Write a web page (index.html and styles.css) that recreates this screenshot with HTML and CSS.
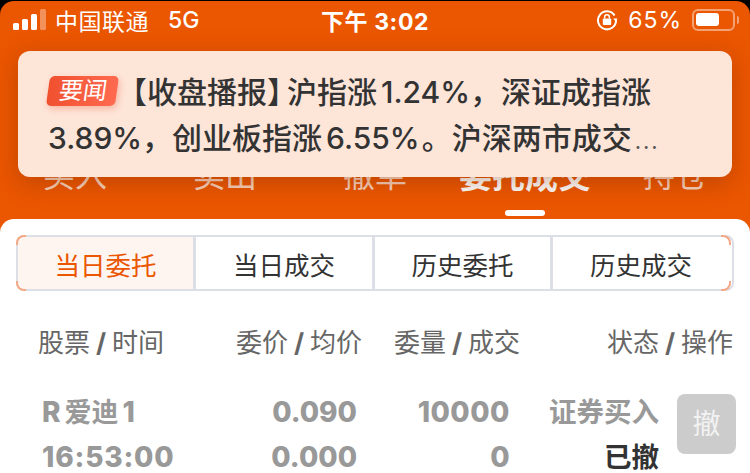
FILE: index.html
```html
<!DOCTYPE html>
<html lang="zh-CN">
<head>
  <meta charset="UTF-8">
  <meta name="viewport" content="width=device-width, initial-scale=1">
  <title>委托成交</title>
  <link rel="stylesheet" href="styles.css">
</head>
<body>
  <div class="screen">
    <div class="status-bar">
      <div class="status-left">
        <svg class="signal" width="36" height="21" viewBox="0 0 36 21">
          <rect x="1" y="14" width="6" height="7" rx="1.5" fill="#fff"/>
          <rect x="10" y="10" width="6" height="11" rx="1.5" fill="#fff"/>
          <rect x="19" y="5" width="6" height="16" rx="1.5" fill="#fff"/>
          <rect x="28" y="0" width="6" height="21" rx="1.5" fill="#fff" fill-opacity="0.35"/>
        </svg>
        <span class="carrier">中国联通</span>
        <span class="network">5G</span>
      </div>
      <div class="status-time">下午 3:02</div>
      <div class="status-right">
        <svg class="lock" width="22" height="22" viewBox="0 0 22 22" fill="none">
          <path d="M18.6 6.5A9 9 0 1 0 20 11" stroke="#fff" stroke-width="2"/>
          <path d="M21.6 9.4h-4.4l2.4 3z" fill="#fff"/>
          <rect x="6.8" y="9.6" width="8.4" height="6.4" rx="1" fill="#fff"/>
          <path d="M8.6 9.6V8.2a2.4 2.4 0 0 1 4.8 0v1.4" stroke="#fff" stroke-width="1.5"/>
        </svg>
        <span class="percent">65%</span>
        <div class="battery"><div class="battery-level"></div></div>
        <div class="battery-cap"></div>
      </div>
    </div>

    <div class="nav-tabs">
      <div class="nav-tab">买入</div>
      <div class="nav-tab">卖出</div>
      <div class="nav-tab">撤单</div>
      <div class="nav-tab active">委托成交</div>
      <div class="nav-tab">持仓</div>
    </div>

    <div class="sheet">
      <div class="segments">
        <div class="segment current">当日委托</div>
        <div class="segment">当日成交</div>
        <div class="segment">历史委托</div>
        <div class="segment last">历史成交</div>
      </div>

      <div class="table-head">
        <div>股票<i>/</i>时间</div>
        <div>委价<i>/</i>均价</div>
        <div>委量<i>/</i>成交</div>
        <div>状态<i>/</i>操作</div>
      </div>

      <div class="order-row">
        <div class="col-name">
          <div>R<span class="cn">爱迪</span>1</div>
          <div class="time">16:53:00</div>
        </div>
        <div class="col-price">
          <div>0.090</div>
          <div>0.000</div>
        </div>
        <div class="col-qty">
          <div>10000</div>
          <div>0</div>
        </div>
        <div class="col-state">
          <div>证券买入</div>
          <div class="state-done">已撤</div>
        </div>
        <div class="cancel-btn">撤</div>
      </div>
    </div>

    <div class="notice">
      <div class="notice-line"><span class="badge"><span class="badge-text">要闻</span></span>【收盘播报<span class="tight">】</span>沪指涨<span class="num">1.24%</span>，<span class="lead">深证成指涨</span></div>
      <div class="notice-line">3.89%，创业板指涨<span class="num">6.55%</span><span class="stop">。</span>沪深两市成交<span class="more">...</span></div>
    </div>
  </div>
</body>
</html>
```

FILE: styles.css
```css
* {
  box-sizing: border-box;
}
html, body {
  margin: 0;
  height: 473px;
  overflow: hidden;
  background: #000;
}
body {
  font-family: Inter, "Noto Sans CJK SC", sans-serif;
  padding-top: 1px;
}
.screen {
  position: relative;
  height: 472px;
  background: #eb5600;
  border-radius: 14px 14px 0 0;
  overflow: hidden;
}

/* status bar */
.status-bar {
  height: 43px;
  padding: 0 12px 6px;
  display: grid;
  grid-template-columns: 1fr auto 1fr;
  align-items: center;
  color: #fff;
  font-size: 23px;
}
.status-left {
  display: flex;
  align-items: center;
}
.signal {
  margin-right: 7px;
}
.carrier {
  letter-spacing: 0.5px;
}
.network {
  margin-left: 19px;
  font-weight: 500;
}
.status-time {
  font-weight: 700;
  letter-spacing: 0.6px;
}
.status-right {
  display: flex;
  align-items: center;
  justify-content: flex-end;
  margin-right: -1px;
}
.lock {
  margin-right: 10px;
}
.percent {
  letter-spacing: 1px;
  margin-right: 10px;
}
.battery {
  width: 43px;
  height: 22px;
  padding: 2.5px 2px;
  border: 2px solid rgba(255,255,255,0.45);
  border-radius: 6px;
}
.battery-level {
  width: 23px;
  height: 100%;
  background: #fff;
  border-radius: 3px;
}
.battery-cap {
  width: 2px;
  height: 8px;
  margin-left: 2px;
  background: rgba(255,255,255,0.45);
  border-radius: 0 2px 2px 0;
}

/* tabs behind the notice */
.nav-tabs {
  display: grid;
  grid-template-columns: repeat(5, 150px);
  height: 175px;
  padding-top: 112px;
}
.nav-tab {
  position: relative;
  text-align: center;
  font-size: 32px;
  line-height: 40px;
  color: rgba(255,255,255,0.75);
}
.nav-tab.active {
  color: #fff;
  font-weight: 700;
  font-size: 33px;
}
.nav-tab.active::after {
  content: "";
  position: absolute;
  left: 55px;
  top: 54px;
  width: 40px;
  height: 6px;
  border-radius: 3px;
  background: #fff;
}

/* white sheet */
.sheet {
  height: 254px;
  background: #fff;
  border-radius: 14px 14px 0 0;
  padding: 16px 16px 0;
}
.segments {
  display: grid;
  grid-template-columns: 175px 179px 178px 179px;
  height: 56px;
  border: 2px solid #dcdfe6;
  border-radius: 8px;
  font-size: 25.5px;
  color: #333;
}
.segment {
  position: relative;
  display: flex;
  align-items: center;
  justify-content: center;
  border-left: 3px solid #dcdfe6;
}
.segment:first-child {
  border-left: 0;
}
.segment.current {
  background: #fef5f0;
  color: #eb5600;
  border-radius: 6px 0 0 6px;
}
/* peach corners on the outer edge */
.current::before, .current::after, .last::before, .last::after {
  content: "";
  position: absolute;
  width: 8px;
  height: 8px;
  border: 0 solid #f3a985;
}
.current::before {
  left: -2px;
  top: -2px;
  border-width: 2px 0 0 2px;
  border-radius: 8px 0 0 0;
}
.current::after {
  left: -2px;
  bottom: -2px;
  border-width: 0 0 2px 2px;
  border-radius: 0 0 0 8px;
}
.last::before {
  right: -2px;
  top: -2px;
  border-width: 2px 2px 0 0;
  border-radius: 0 8px 0 0;
}
.last::after {
  right: -2px;
  bottom: -2px;
  border-width: 0 2px 2px 0;
  border-radius: 0 0 8px 0;
}

.table-head {
  display: grid;
  grid-template-columns: 146px 178px 158px 213px;
  margin-top: 32px;
  padding-left: 22px;
  font-size: 26px;
  line-height: 40px;
  color: #666;
}
.table-head div {
  text-align: right;
  white-space: nowrap;
}
.table-head div:first-child {
  text-align: left;
}
.table-head i {
  font-style: normal;
  font-weight: 700;
  margin: 0 6px;
}

.order-row {
  display: grid;
  grid-template-columns: 150px 165px 153px 149px 77px;
  margin-top: 27px;
  padding-left: 26px;
  font-size: 28px;
  line-height: 45px;
  font-weight: 800;
  color: #999;
}
.cn {
  margin: 0 4px;
  font-size: 27px;
  font-weight: 700;
}
.col-name {
  white-space: nowrap;
}
.time {
  letter-spacing: 0.8px;
}
.col-price, .col-qty, .col-state {
  text-align: right;
}
.col-qty {
  letter-spacing: 0.5px;
}
.col-state {
  font-size: 27.5px;
  font-weight: 700;
}
.state-done {
  color: #333;
}
.cancel-btn {
  width: 59px;
  height: 60px;
  margin-left: 18px;
  margin-top: 4px;
  display: flex;
  align-items: center;
  justify-content: center;
  background: #ccc;
  color: #f2f2f2;
  border-radius: 8px;
  font-size: 28px;
  font-weight: 400;
}

/* notice over the tabs */
.notice {
  position: absolute;
  left: 18px;
  top: 50px;
  width: 714px;
  height: 126px;
  padding: 18px 30px;
  background: #fde5d8;
  border-radius: 12px;
  box-shadow: 0 6px 24px rgba(110,40,0,0.35);
  font-size: 30px;
  line-height: 46px;
  font-weight: 500;
  color: #333;
  white-space: nowrap;
}
.badge {
  display: inline-block;
  position: relative;
  width: 69px;
  height: 30px;
  vertical-align: -3px;
  transform: skewX(-8deg);
  background: linear-gradient(90deg, #f0512f, #ff6a50);
  border-radius: 5px;
  box-shadow: 2px 3px 6px rgba(240,80,50,0.3);
}
.badge-text {
  position: absolute;
  left: 11px;
  top: 0;
  font-size: 24px;
  font-weight: 400;
  line-height: 30px;
  color: #fff;
}
.tight {
  letter-spacing: -10px;
}
.num {
  margin-left: 4px;
}
.lead {
  margin-left: 1px;
}
.stop {
  margin-left: 2px;
}
.more {
  margin-left: 3px;
  font-size: 22px;
  font-weight: 400;
  letter-spacing: 2px;
  color: #555;
}
```
